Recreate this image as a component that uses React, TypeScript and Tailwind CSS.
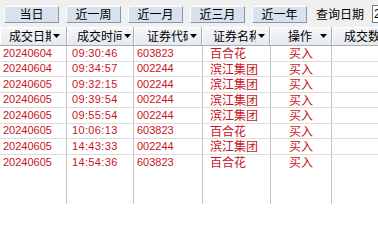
import React from 'react';

const trades = [
  { date: '20240604', time: '09:30:46', code: '603823', name: '百合花', op: '买入' },
  { date: '20240604', time: '09:34:57', code: '002244', name: '滨江集团', op: '买入' },
  { date: '20240605', time: '09:32:15', code: '002244', name: '滨江集团', op: '买入' },
  { date: '20240605', time: '09:39:54', code: '002244', name: '滨江集团', op: '买入' },
  { date: '20240605', time: '09:55:54', code: '002244', name: '滨江集团', op: '买入' },
  { date: '20240605', time: '10:06:13', code: '603823', name: '百合花', op: '买入' },
  { date: '20240605', time: '14:43:33', code: '002244', name: '滨江集团', op: '买入' },
  { date: '20240605', time: '14:54:36', code: '603823', name: '百合花', op: '买入' },
];

const ranges = ['当日', '近一周', '近一月', '近三月', '近一年'];

const Caret = () => (
  <svg width="7" height="4" viewBox="0 0 7 4" className="shrink-0">
    <path d="M0 0h7L3.5 4z" fill="#000" />
  </svg>
);

const HeaderCell: React.FC<{ label: string; w: string; textW: string; pl: string; caret?: boolean }> = ({ label, w, textW, pl, caret = true }) => (
  <div className={`${w} ${pl} h-full flex items-center shrink-0 border-r border-r-[#a8adb5] shadow-[inset_1px_1px_0_#ffffff] overflow-hidden`}>
    <span className={`${textW} overflow-hidden whitespace-nowrap text-[12px] leading-none text-black`}>{label}</span>
    {caret && <Caret />}
  </div>
);

const cell = 'h-full flex items-center shrink-0 border-r border-r-[#c4c4c4] whitespace-nowrap';

export default function App() {
  return (
    <div className="w-[378px] h-[204px] bg-[#f0f0f0] overflow-hidden flex flex-col font-['Liberation_Sans','Noto_Sans_CJK_SC',sans-serif]">
      {/* toolbar */}
      <div className="h-[27px] shrink-0 flex items-center pl-[4px] gap-[7px] pt-[1px]">
        {ranges.map((r) => (
          <button
            key={r}
            className="w-[55px] h-[17px] shrink-0 flex items-center justify-center bg-[#d8e2ee] border border-t-white border-l-white border-b-[#8e959e] border-r-[#8e959e] shadow-[0_0_0_1px_#eef2f7] text-[12px] leading-none text-black font-['Noto_Sans_CJK_SC',sans-serif]"
          >
            {r}
          </button>
        ))}
        <span className="ml-[2px] text-[12px] leading-none text-black whitespace-nowrap font-['Noto_Sans_CJK_SC',sans-serif]">查询日期</span>
        <div className="ml-[1px] w-[20px] h-[18px] shrink-0 bg-white border border-[#7a7a7a] flex items-center pl-[1px] text-[12px] leading-none text-black">2</div>
      </div>

      {/* table */}
      <div className="flex-1 flex flex-col bg-white min-h-0">
        <div className="h-[19px] shrink-0 flex bg-gradient-to-b from-[#f5f7fa] to-[#e6eaf0] border-b border-b-[#a8adb5] font-['Noto_Sans_CJK_SC',sans-serif]">
          <HeaderCell label="成交日期" w="w-[67px]" textW="w-[42px] mr-[2px]" pl="pl-[9px]" />
          <HeaderCell label="成交时间" w="w-[67px]" textW="w-[45px] mr-[2px]" pl="pl-[10px]" />
          <HeaderCell label="证券代码" w="w-[68px]" textW="w-[41px] mr-[2px]" pl="pl-[13px]" />
          <HeaderCell label="证券名称" w="w-[68px]" textW="w-[43px] mr-[2px]" pl="pl-[11px]" />
          <HeaderCell label="操作" w="w-[62px]" textW="w-[30px] mr-[2px]" pl="pl-[18px]" />
          <HeaderCell label="成交数量" w="w-[60px]" textW="w-[50px]" pl="pl-[12px]" caret={false} />
        </div>

        {trades.map((t, i) => (
          <div key={i} className={`h-[15.5px] shrink-0 flex text-[11px] leading-none text-[#c8141e] ${i < trades.length - 1 ? 'border-b border-b-[#dcdcdc]' : ''}`}>
            <div className={`${cell} w-[67px] pl-[3px]`}>{t.date}</div>
            <div className={`${cell} w-[67px] pl-[5px] tracking-[0.35px]`}>{t.time}</div>
            <div className={`${cell} w-[69px] pl-[3px]`}>{t.code}</div>
            <div className={`${cell} w-[68px] pl-[7px] text-[12px] font-['Noto_Sans_CJK_SC',sans-serif]`}>{t.name}</div>
            <div className={`${cell} w-[61px] justify-center text-[12px] font-['Noto_Sans_CJK_SC',sans-serif]`}>{t.op}</div>
            <div className="h-full flex-1" />
          </div>
        ))}

        {/* empty area keeps column lines */}
        <div className="flex-1 flex">
          <div className={`${cell} w-[67px]`} />
          <div className={`${cell} w-[67px]`} />
          <div className={`${cell} w-[69px]`} />
          <div className={`${cell} w-[68px]`} />
          <div className={`${cell} w-[61px]`} />
          <div className="flex-1" />
        </div>
      </div>
    </div>
  );
}
